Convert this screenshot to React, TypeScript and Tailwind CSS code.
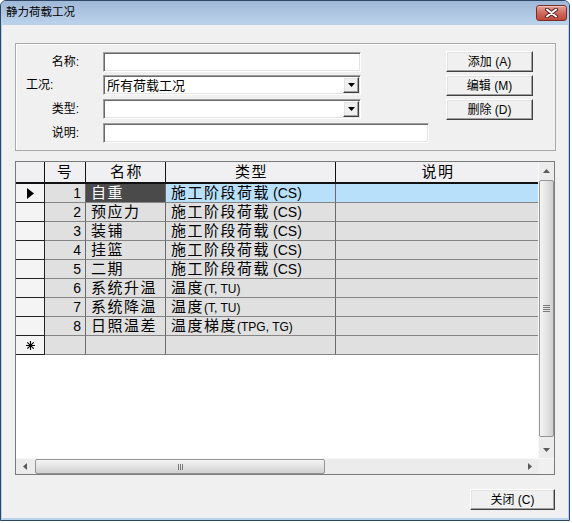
import React from 'react'

const rows = [
  { n: 1, name: '自重', cjk: '施工阶段荷载', lat: '(CS)', big: true },
  { n: 2, name: '预应力', cjk: '施工阶段荷载', lat: '(CS)', big: true },
  { n: 3, name: '装铺', cjk: '施工阶段荷载', lat: '(CS)', big: true },
  { n: 4, name: '挂篮', cjk: '施工阶段荷载', lat: '(CS)', big: true },
  { n: 5, name: '二期', cjk: '施工阶段荷载', lat: '(CS)', big: true },
  { n: 6, name: '系统升温', cjk: '温度', lat: '(T, TU)', big: false },
  { n: 7, name: '系统降温', cjk: '温度', lat: '(T, TU)', big: false },
  { n: 8, name: '日照温差', cjk: '温度梯度', lat: '(TPG, TG)', big: false },
]

const sunken =
  'border border-t-[#a0a0a0] border-l-[#a0a0a0] border-b-white border-r-white shadow-[inset_1px_1px_0_#696969,inset_-1px_-1px_0_#e3e3e3] bg-white'
const raised =
  'border border-t-white border-l-white border-b-[#404040] border-r-[#404040] shadow-[inset_-1px_-1px_0_#a0a0a0,inset_1px_1px_0_#e3e3e3] bg-[#f0f0f0]'

function Button({ label, className = '' }: { label: string; className?: string }) {
  return (
    <div className={`${raised} w-[87px] h-[21px] flex items-center justify-center text-[12px] leading-none ${className}`}>
      {label}
    </div>
  )
}

function Combo({ value }: { value?: string }) {
  return (
    <div className={`${sunken} w-[258px] h-[20px] flex items-center pl-[3px] pr-[1px]`}>
      <span className="flex-1 text-[13px] leading-none">{value}</span>
      <div className={`${raised} w-[16px] h-[16px] flex items-center justify-center`}>
        <svg width="7" height="4" viewBox="0 0 7 4">
          <path d="M0 0h7L3.5 4z" fill="#000" />
        </svg>
      </div>
    </div>
  )
}

function Arrow({ dir }: { dir: 'up' | 'down' | 'left' | 'right' }) {
  const d = {
    up: 'M0 4h7L3.5 0z',
    down: 'M0 0h7L3.5 4z',
    left: 'M4 0v7L0 3.5z',
    right: 'M0 0v7L4 3.5z',
  }[dir]
  const v = dir === 'up' || dir === 'down'
  return (
    <svg width={v ? 7 : 4} height={v ? 4 : 7} viewBox={v ? '0 0 7 4' : '0 0 4 7'}>
      <path d={d} fill="#5a5a5a" />
    </svg>
  )
}

function VScroll() {
  return (
    <div className="w-[16px] h-[296px] flex flex-col bg-[#ececec] border-l border-[#f8f8f8]">
      <div className="h-[17px] flex items-center justify-center">
        <Arrow dir="up" />
      </div>
      <div className="mt-[1px] h-[257px] rounded-[2px] border border-[#959595] bg-gradient-to-r from-[#f4f4f4] via-[#e4e4e4] to-[#cfcfcf] flex flex-col items-center justify-center gap-[1px]">
        <div className="w-[7px] h-[1px] bg-[#7a7a7a]" />
        <div className="w-[7px] h-[1px] bg-[#7a7a7a]" />
        <div className="w-[7px] h-[1px] bg-[#7a7a7a]" />
        <div className="w-[7px] h-[1px] bg-[#7a7a7a]" />
      </div>
      <div className="flex-1" />
      <div className="h-[17px] flex items-center justify-center">
        <Arrow dir="down" />
      </div>
    </div>
  )
}

function HScroll() {
  return (
    <div className="h-[16px] flex bg-[#ececec] border-t border-[#f8f8f8]">
      <div className="w-[17px] h-full flex items-center justify-center">
        <Arrow dir="left" />
      </div>
      <div className="ml-[2px] w-[290px] h-full rounded-[2px] border border-[#959595] bg-gradient-to-b from-[#f4f4f4] via-[#e4e4e4] to-[#cfcfcf] flex items-center justify-center gap-[1px]">
        <div className="w-[1px] h-[6px] bg-[#7a7a7a]" />
        <div className="w-[1px] h-[6px] bg-[#7a7a7a]" />
        <div className="w-[1px] h-[6px] bg-[#7a7a7a]" />
      </div>
      <div className="flex-1" />
      <div className="w-[17px] h-full flex items-center justify-center">
        <Arrow dir="right" />
      </div>
      <div className="w-[16px] h-full bg-[#f0f0f0]" />
    </div>
  )
}

function Cjk({ children }: { children: React.ReactNode }) {
  return <span className="text-[15px] tracking-[1.5px]">{children}</span>
}

function Table() {
  return (
    <div className="w-[522px] h-[296px] bg-white text-[14px]">
      {/* header */}
      <div className="flex h-[22px] bg-[#f0f0f2] border-b-2 border-[#111] leading-[20px] text-center">
        <div className="w-[29px] border-r border-[#111]" />
        <div className="w-[41px] border-r border-[#111]"><Cjk>号</Cjk></div>
        <div className="w-[80px] border-r border-[#111] pl-[2px]"><Cjk>名称</Cjk></div>
        <div className="w-[170px] border-r border-[#111] pl-[2px]"><Cjk>类型</Cjk></div>
        <div className="w-[202px] pl-[2px]"><Cjk>说明</Cjk></div>
      </div>
      {rows.map((r, i) => {
        const sel = i === 0
        return (
          <div key={r.n} className="flex h-[19px] leading-[18px]">
            <div className="w-[29px] bg-[#f4f4f4] border-r border-b border-[#222] flex items-center justify-center">
              {sel && (
                <svg width="7" height="11" viewBox="0 0 7 11">
                  <path d="M0 0v11l7-5.5z" fill="#000" />
                </svg>
              )}
            </div>
            <div className="w-[41px] bg-[#e0e0e0] border-r border-b border-r-[#6a6a6a] border-b-[#858585] text-right pr-[4px]">
              {r.n}
            </div>
            <div
              className={`w-[80px] border-r border-b border-r-[#6a6a6a] border-b-[#858585] pl-[5px] whitespace-nowrap ${
                sel ? 'bg-[#4a4a4a] text-white' : 'bg-[#e0e0e0]'
              }`}
            >
              <Cjk>{r.name}</Cjk>
            </div>
            <div
              className={`w-[170px] border-r border-b border-r-[#6a6a6a] border-b-[#858585] pl-[5px] whitespace-nowrap ${
                sel ? 'bg-[#b9e0fb]' : 'bg-[#e0e0e0]'
              }`}
            >
              <Cjk>{r.cjk}</Cjk>
              <span className={r.big ? 'ml-[3px] text-[14px]' : 'text-[12px]'}>{r.lat}</span>
            </div>
            <div
              className={`w-[202px] border-b border-b-[#858585] ${sel ? 'bg-[#b9e0fb]' : 'bg-[#e0e0e0]'}`}
            />
          </div>
        )
      })}
      {/* new row */}
      <div className="flex h-[19px]">
        <div className="w-[29px] bg-[#f4f4f4] border-r border-b border-[#222] flex items-center justify-center">
          <svg width="9" height="9" viewBox="0 0 9 9">
            <path d="M4.5 0v9M0 4.5h9M1.3 1.3l6.4 6.4M7.7 1.3l-6.4 6.4" stroke="#000" strokeWidth="1.1" />
          </svg>
        </div>
        <div className="w-[41px] bg-[#e0e0e0] border-r border-b border-r-[#6a6a6a] border-b-[#858585]" />
        <div className="w-[80px] bg-[#e0e0e0] border-r border-b border-r-[#6a6a6a] border-b-[#858585]" />
        <div className="w-[170px] bg-[#e0e0e0] border-r border-b border-r-[#6a6a6a] border-b-[#858585]" />
        <div className="w-[202px] bg-[#e0e0e0] border-b border-b-[#858585]" />
      </div>
    </div>
  )
}

export default function App() {
  return (
    <div className="w-[572px] h-[523px] bg-white font-['Liberation_Sans','Noto_Sans_CJK_SC',sans-serif] text-black">
      <div className="w-[570px] h-[521px] border border-[#2d4664] rounded-t-[6px] bg-[#b9d1ea] flex flex-col overflow-hidden">
        {/* title bar */}
        <div className="h-[24px] flex items-start bg-gradient-to-b from-[#9fb8d6] to-[#bcd3ec]">
          <span className="pl-[5px] pt-[4px] text-[11.5px] leading-[14px]">静力荷载工况</span>
          <div className="ml-auto mr-[2px] mt-[4px] w-[31px] h-[16px] rounded-[3px] border border-[#7a2e2a] bg-gradient-to-b from-[#e4a196] via-[#cf6a5e] to-[#c0453a] flex items-center justify-center shadow-[inset_0_1px_0_#f1c0b8]">
            <svg width="13" height="10" viewBox="0 0 13 10">
              <path d="M2 1.5l9 7M11 1.5l-9 7" stroke="#5a2420" strokeWidth="4" strokeLinecap="round" />
              <path d="M2 1.5l9 7M11 1.5l-9 7" stroke="#fff" strokeWidth="2" strokeLinecap="round" />
            </svg>
          </div>
        </div>

        {/* client */}
        <div className="mx-[1px] h-[493px] bg-[#f0f0f0] flex flex-col text-[12px]">
          {/* group box */}
          <div className="ml-[13px] mt-[18px] w-[541px] h-[108px] border border-[#a9a9a9] shadow-[inset_1px_1px_0_#fff] flex pt-[8px]">
            <div className="w-[413px] flex flex-col">
              <div className="flex items-center h-[20px]">
                <div className="w-[87px] text-right pr-[24px]">名称:</div>
                <div className={`${sunken} w-[258px] h-[20px]`} />
              </div>
              <div className="flex items-center h-[20px] mt-[3px]">
                <div className="w-[87px] pl-[10px]">工况:</div>
                <Combo value="所有荷载工况" />
              </div>
              <div className="flex items-center h-[20px] mt-[4px]">
                <div className="w-[87px] text-right pr-[24px]">类型:</div>
                <Combo />
              </div>
              <div className="flex items-center h-[20px] mt-[4px]">
                <div className="w-[87px] text-right pr-[24px]">说明:</div>
                <div className={`${sunken} w-[326px] h-[20px]`} />
              </div>
            </div>
            <div className="ml-[17px] flex flex-col gap-[3px] -mt-[1px]">
              <Button label="添加 (A)" />
              <Button label="编辑 (M)" />
              <Button label="删除 (D)" />
            </div>
          </div>

          {/* grid */}
          <div className="ml-[13px] mt-[10px] w-[540px] h-[314px] border border-[#7a7a7a] flex flex-col">
            <div className="flex">
              <Table />
              <VScroll />
            </div>
            <HScroll />
          </div>

          <div className="ml-[468px] mt-[14px]">
            <div className={`${raised} w-[85px] h-[21px] flex items-center justify-center text-[12px] leading-none`}>
              关闭 (C)
            </div>
          </div>
        </div>
      </div>
    </div>
  )
}
